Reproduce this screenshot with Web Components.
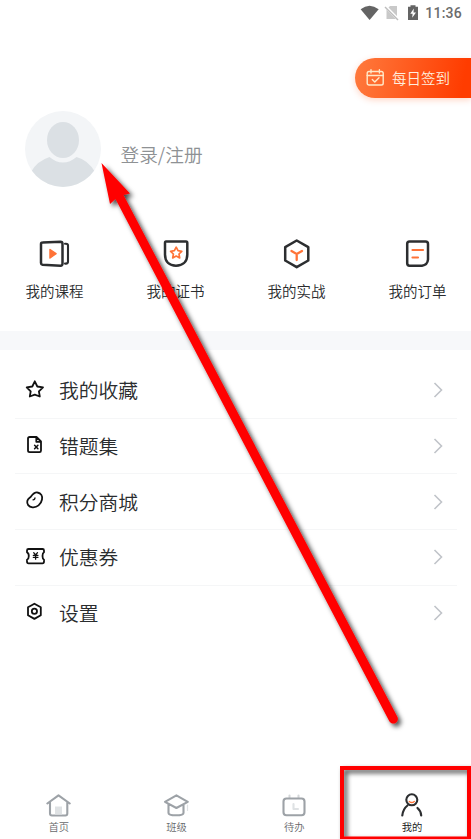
<!DOCTYPE html>
<html lang="zh-CN">
<head>
<meta charset="utf-8">
<title>我的</title>
<style>
html,body{margin:0;background:#fff}
body{width:471px;height:839px;overflow:hidden;font-family:"Noto Sans CJK SC",sans-serif;font-weight:350}
</style>
</head>
<body>
<profile-page></profile-page>
<script>
const define = (name, html) => customElements.define(name, class extends HTMLElement {
  constructor() {
    super();
    const t = document.createElement('template');
    t.innerHTML = html;
    this.attachShadow({mode: 'open'}).append(t.content.cloneNode(true));
  }
});

define('status-bar', `
<style>
:host{display:flex;height:26px;justify-content:flex-end;align-items:center;box-sizing:border-box;padding-right:9px;font:500 14px/26px Roboto,sans-serif;color:#6c6c6c}
svg{display:block;margin-right:5px}
span{letter-spacing:.25px}
</style>
<svg width="60" height="20" viewBox="360 3 60 20">
<path d="M360.600 9.300Q369.500 2 378.700 9.300L369.600 20Z" fill="#646464"/>
<path d="M390 6H397V19H386.500V9.500Z" fill="#c9c9c9"/><path d="M385 6L398.500 19.800" stroke="#fff" stroke-width="3"/><path d="M385 7L398 20" stroke="#bdbdbd" stroke-width="1.400"/>
<path d="M410.500 5.200H415.500V6.800H418V20H408V6.800H410.500Z" fill="#646464"/><path d="M413.800 8.500L410.300 13.700H412.600L412.200 17.800L416 12.500H413.500Z" fill="#fff"/>
</svg><span><slot></slot></span>`);

define('check-in-button', `
<style>
:host{display:flex;align-items:center;box-sizing:border-box;width:116px;height:40px;padding-left:11px;gap:7px;border-radius:20px 0 0 20px;background:linear-gradient(100deg,#ff7a3d,#ff3c00 92%);box-shadow:0 2px 6px #ff5a2040;color:#ffeede;font-size:14.500px;line-height:20px;white-space:nowrap}
svg{display:block}
</style>
<svg width="19" height="18" viewBox="0 0 19 18" fill="none" stroke="#ffe9c8" stroke-width="1.400" stroke-linecap="round" stroke-linejoin="round"><rect x="1.200" y="2.500" width="16" height="13.500" rx="1.800"/><path d="M1.200 6.500H17.200M5 .8V4M13.400 .8V4M6.300 10.500L8.800 13L13 8.700"/></svg>
<slot></slot>`);

define('user-header', `
<style>
:host{display:flex;align-items:center;gap:18.500px;padding:0 25px;color:#8e9194;font-size:18.700px;line-height:26px}
svg{display:block}
span{padding-top:9px}
</style>
<svg width="77" height="77" viewBox="0 0 77 77"><defs><clipPath id="c"><circle cx="38" cy="38" r="38"/></clipPath></defs>
<circle cx="38" cy="38" r="38" fill="#f3f5f7"/><g clip-path="url(#c)" fill="#dbe0e4"><ellipse cx="38" cy="29" rx="16" ry="18"/><path d="M6 61Q12 50 24.500 46Q31 51.500 38 51.500Q45 51.500 51.500 46Q63 49 70 61V77H6Z"/></g></svg>
<span><slot></slot></span>`);

define('quick-entry', `
<style>
:host{display:flex;flex-direction:column;align-items:center;width:59px;color:#2a2c2e;font-size:14.500px;line-height:22px;white-space:nowrap}
::slotted(svg){display:block;margin-bottom:10px}
</style>
<slot name="icon"></slot><span><slot></slot></span>`);

define('menu-row', `
<style>
:host{display:flex;align-items:center;box-sizing:border-box;height:55.700px;padding:0 14px 0 9px;border-bottom:1px solid #f5f6f7;color:#2a2c2e;font-size:19.800px;line-height:28px}
:host(:last-child){border-bottom-color:transparent}
::slotted(svg){display:block;flex:none;margin:0 13px 3px 0}
span{flex:1}
.go{display:block}
</style>
<slot name="icon"></slot><span><slot></slot></span>
<svg class="go" width="10" height="16" viewBox="0 0 10 16" fill="none" stroke="#c0c4c9" stroke-width="1.600"><path d="M1.500 1L8.500 8L1.500 15"/></svg>`);

define('tab-item', `
<style>
:host{display:flex;flex-direction:column;align-items:center;flex:1;color:#68696c;font-size:10.300px;line-height:15px}
:host([active]){color:#111}
::slotted(svg){display:block}
</style>
<slot name="icon"></slot><span><slot></slot></span>`);

define('pointer-marks', `
<style>
:host{position:absolute;inset:0;pointer-events:none}
svg{display:block}
</style>
<svg width="471" height="839" viewBox="0 0 471 839">
<defs><filter id="s" filterUnits="userSpaceOnUse" x="0" y="0" width="490" height="860"><feDropShadow dx="3" dy="3" stdDeviation="2.800" flood-color="#000" flood-opacity=".72"/></filter></defs>
<g filter="url(#s)"><path d="M101.500 163L130 193.500L123.500 195L397.300 716.800A4.500 4.500 0 0 1 389.300 721.200L115.500 199L110 204Z" fill="#f00"/></g>
<rect x="342" y="768" width="127" height="70.500" fill="none" stroke="#f00" stroke-width="4" filter="url(#s)"/>
</svg>`);

define('profile-page', `
<style>
:host{display:flex;flex-direction:column;position:relative;width:471px;height:839px;overflow:hidden;background:#fff}
check-in-button{align-self:flex-end;margin-top:32px}
user-header{margin-top:13px}
.entries{display:flex;justify-content:space-between;padding:0 24px 0 25px;margin-top:50px}
.band{height:19px;background:#f7f8fa;margin-top:29px}
.menu{padding:13px 14px 0 15px}
.tabs{display:flex;margin-top:auto;padding-bottom:5px}
.grey{fill:none;stroke:#9da2a7;stroke-width:2.100;stroke-linejoin:round;stroke-linecap:round}
.dark{fill:none;stroke:#2c2e30;stroke-width:2.500;stroke-linejoin:round;stroke-linecap:round}
.line{fill:none;stroke:#111;stroke-width:1.800;stroke-linejoin:round;stroke-linecap:round}
.hot{stroke:#ff7337}
</style>
<status-bar>11:36</status-bar>
<check-in-button>每日签到</check-in-button>
<user-header>登录/注册</user-header>
<div class="entries">
<quick-entry><svg slot="icon" class="dark" width="32" height="32" viewBox="39 238 32 32"><path d="M42.500 242.500L60.500 241.800Q62.500 241.800 62.500 244V263.500Q62.500 265.800 60.500 265.700L42.500 264.700Q41 264.500 41 263V244Q41 242.500 42.500 242.500Z"/><path d="M65 243.700H66Q68 243.700 68 245.500V261.500Q68 263.600 66 263.600H65" stroke-width="2.100"/><path d="M50 249.500L56 253.700L50 258Z" fill="#ff7337" class="hot" stroke-width="1.500"/></svg>我的课程</quick-entry>
<quick-entry><svg slot="icon" class="dark" width="32" height="32" viewBox="159 238 32 32"><path d="M165 241.500H185Q186.300 241.500 186.300 243V254.500C186.300 262 181.500 265.700 175 265.700S164 262 164 254.500V243Q164 241.500 165 241.500Z"/><path class="hot" stroke-width="1.700" d="M175.200 247.200L177 250.700L180.800 251.300L178 254L178.700 257.900L175.200 256.100L171.700 257.900L172.400 254L169.600 251.300L173.400 250.700Z"/></svg>我的证书</quick-entry>
<quick-entry><svg slot="icon" class="dark" width="32" height="32" viewBox="281 238 32 32"><path d="M296.700 240.500L308.300 247.200V260.500L296.700 267.200L285.200 260.500V247.200Z"/><path class="hot" stroke-width="2.300" d="M291.500 251L296.700 254L302 251M296.700 254V260"/></svg>我的实战</quick-entry>
<quick-entry><svg slot="icon" class="dark" width="32" height="32" viewBox="402 238 32 32"><path d="M409.500 241.500H425.500Q428 241.500 428 244V259.500Q427.500 265 422 265.700H409.500Q407.200 265.700 407.200 263.300V244Q407.200 241.500 409.500 241.500Z"/><path class="hot" stroke-width="2.200" d="M412.500 250H423M412.500 257.500H418"/></svg>我的订单</quick-entry>
</div>
<div class="band"></div>
<div class="menu">
<menu-row><svg slot="icon" class="line" width="22" height="22" viewBox="24 378.500 22 22"><path d="M34.800 381.800L37.300 387L43 387.900L38.900 391.900L39.800 397L34.800 395.100L29.800 397L30.700 391.900L26.700 387.900L32.300 387Z"/></svg>我的收藏</menu-row>
<menu-row><svg slot="icon" class="line" width="22" height="22" viewBox="24 434 22 22"><path d="M29.700 437H36.500L41 441.500V450.600Q41 452.200 39.500 452.200H29.700Q28 452.200 28 450.600V438.600Q28 437 29.700 437ZM36.300 437.500V441.800H40.700" /><path stroke-width="1.500" d="M34.600 445.200L37.900 448.700M37.900 445.200L34.600 448.700"/></svg>错题集</menu-row>
<menu-row><svg slot="icon" class="line" width="22" height="22" viewBox="24 489.500 22 22"><path d="M31 497C32.500 495 34.500 492.500 37.500 493C41 493.500 42.800 496.500 42 500C41 505 37 508.200 32.500 507.800C28.500 507.500 26.700 504.500 27.300 501.500C28 498.500 30 498.500 31 497Z"/><path d="M33 500.300Q35 500.200 35 498.300" stroke-width="1.300"/></svg>积分商城</menu-row>
<menu-row><svg slot="icon" class="line" width="22" height="22" viewBox="24 545 22 22"><path d="M28.500 549H42.500Q44 549 44 550.500V552.300Q42.500 553 42.500 556Q42.500 559 44 559.800V561.500Q44 563.300 42.500 563.300H28.500Q27 563.300 27 561.500V559.800Q28.800 559 28.800 556Q28.800 553 27 552.300V550.500Q27 549 28.500 549Z"/><path stroke-width="1.300" d="M33.700 552.700L35.600 555L37.500 552.700M35.600 555V559.200M33.300 555.300H38M33.300 557.300H38"/></svg>优惠券</menu-row>
<menu-row><svg slot="icon" class="line" width="22" height="22" viewBox="24 601 22 22"><path d="M34.400 603.700L40.800 607.200V615.200L34.400 618.900L28 615.200V607.200Z"/><circle cx="34.400" cy="611.300" r="2.600"/></svg>设置</menu-row>
</div>
<div class="tabs">
<tab-item><svg slot="icon" class="grey" width="28" height="28" viewBox="45 790.500 28 28"><path d="M47.300 803L58.500 794.800L69.800 803M50 802V813Q50 815 52 815H65.300Q67.300 815 67.300 813V802"/><path d="M55 806H62V814H55Z" fill="#dfe2e4" stroke="none"/></svg>首页</tab-item>
<tab-item><svg slot="icon" class="grey" width="28" height="28" viewBox="163 790.500 28 28"><path d="M176.400 794.800L187.800 801.300L176.400 807.500L165 801.300ZM168.500 804V812.500Q168.500 814.800 176 814.800T183.500 812.500V804"/><path d="M187.500 804.500V810" stroke="#dfe2e4" stroke-width="1.200"/></svg>班级</tab-item>
<tab-item><svg slot="icon" class="grey" width="28" height="28" viewBox="280 790.500 28 28"><path d="M289.500 795V797M298.500 795V797" stroke="#d5d8da"/><rect x="283.500" y="798" width="21" height="16.800" rx="3"/><path d="M293.500 803.500V808.500H298" stroke="#dfe2e4"/></svg>待办</tab-item>
<tab-item active><svg slot="icon" class="dark" width="28" height="28" viewBox="398 790.500 28 28"><circle cx="411.800" cy="799.300" r="5.500" stroke-width="2.100"/><path stroke-width="2.200" d="M407.500 805Q403 808.500 402.300 815M417.500 807.500Q421 810.500 421.200 815"/><path class="hot" stroke-width="1.400" d="M409.300 801Q411.800 803.200 414.300 801"/></svg>我的</tab-item>
</div>
<pointer-marks></pointer-marks>`);
</script>
</body>
</html>
